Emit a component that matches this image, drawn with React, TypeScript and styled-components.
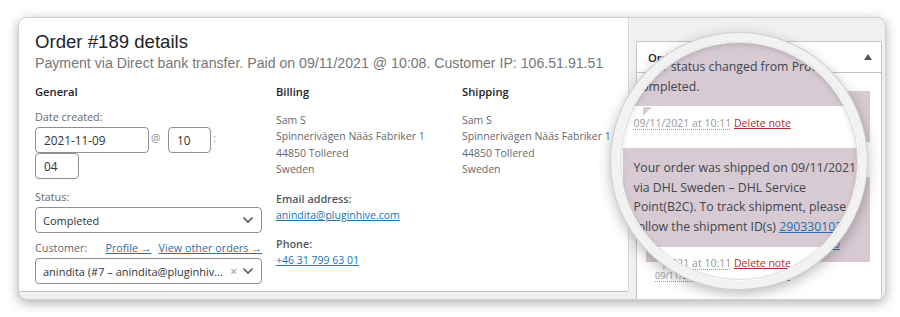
import React from "react";
import styled, { createGlobalStyle } from "styled-components";

const GlobalStyle = createGlobalStyle`
  html, body {
    margin: 0;
    padding: 0;
    background: #fff;
  }
  body {
    font-family: "Open Sans", "Noto Sans", sans-serif;
    color: #3c434a;
  }
  * {
    box-sizing: border-box;
  }
`;

const Page = styled.div`
  width: 900px;
  height: 317px;
  padding: 17px 14px 17px 18px;
`;

const Window = styled.div`
  position: relative;
  display: flex;
  align-items: flex-start;
  width: 868px;
  height: 283px;
  background: #f0f0f1;
  border: 1px solid #cfd0d2;
  border-radius: 9px;
  box-shadow: 0 3px 12px rgba(0, 0, 0, 0.32);
  overflow: hidden;
`;

const Main = styled.section`
  flex-shrink: 0;
  width: 610px;
  height: 274px;
  padding: 13px 16px 0;
  background: #fff;
  border-right: 1px solid #dcdcde;
  border-bottom: 1px solid #c3c4c7;
`;

const Title = styled.h2`
  margin: 0;
  font-family: "Liberation Sans", Arial, sans-serif;
  font-weight: 400;
  font-size: 18.6px;
  line-height: 22px;
  color: #1d2327;
`;

const PaymentLine = styled.p`
  margin: 0;
  font-family: "Liberation Sans", Arial, sans-serif;
  font-size: 14.15px;
  line-height: 20px;
  color: #777;
  white-space: nowrap;
`;

const Columns = styled.div`
  display: grid;
  grid-template-columns: 227px 172px 1fr;
  column-gap: 14px;
  margin-top: 11px;
`;

const Column = styled.div`
  display: flex;
  flex-direction: column;
`;

const ColHead = styled.h3`
  margin: 0;
  font-size: 11.2px;
  font-weight: 600;
  line-height: 16px;
  color: #1d2327;
`;

const FieldLabel = styled.div<{ $mt: number }>`
  margin-top: ${(p) => p.$mt}px;
  font-size: 10.8px;
  line-height: 16px;
  color: #646970;
`;

const DateRow = styled.div`
  display: flex;
  flex-wrap: wrap;
  align-items: center;
  width: 227px;
  margin-top: 2px;
`;

const TextBox = styled.input<{ $w: number }>`
  width: ${(p) => p.$w}px;
  height: 26px;
  margin: 0;
  padding: 0 8px;
  border: 1px solid #8c8f94;
  border-radius: 4px;
  background: #fff;
  font-family: "Open Sans", "Noto Sans", sans-serif;
  font-size: 11.8px;
  color: #2c3338;
  outline: none;
`;

const Sep = styled.span<{ $w: number }>`
  width: ${(p) => p.$w}px;
  padding: 0 0 4px 2px;
  font-size: 10.5px;
  color: #8c8f94;
`;

const Select = styled.div<{ $mt: number }>`
  display: flex;
  align-items: center;
  width: 227px;
  height: 26px;
  margin-top: ${(p) => p.$mt}px;
  padding: 0 7px 0 7px;
  border: 1px solid #8c8f94;
  border-radius: 4px;
  background: #fff;
  font-size: 11px;
  color: #2c3338;
`;

const SelectText = styled.span`
  flex: 1;
  min-width: 0;
  white-space: nowrap;
  overflow: hidden;
  text-overflow: ellipsis;
`;

const Clear = styled.span`
  margin: 0 5px 0 4px;
  font-size: 12px;
  color: #8c8f94;
`;

const CustomerRow = styled.div`
  display: flex;
  justify-content: space-between;
  margin-top: 7px;
  font-size: 10.8px;
  line-height: 16px;
  color: #646970;
`;

const RowLinks = styled.span`
  display: flex;
  gap: 7px;
`;

const Link = styled.a`
  color: #2271b1;
  text-decoration: underline;
  cursor: pointer;
`;

const Address = styled.div`
  margin-top: 11.7px;
  font-size: 10.5px;
  line-height: 16.6px;
  color: #646970;
  white-space: nowrap;
`;

const InfoLabel = styled.div<{ $mt: number }>`
  margin-top: ${(p) => p.$mt}px;
  font-size: 10.8px;
  font-weight: 600;
  line-height: 16px;
  color: #50575e;
`;

const InfoValue = styled.div`
  font-size: 10.5px;
  line-height: 16.6px;
`;

const Sidebar = styled.aside`
  flex-shrink: 0;
  width: 246px;
  height: 270px;
  margin: 23px 0 0 7px;
  background: #fff;
  border: 1px solid #c3c4c7;
`;

const SideHead = styled.div`
  display: flex;
  align-items: center;
  justify-content: space-between;
  height: 31px;
  padding: 0 9px 0 11px;
  border-bottom: 1px solid #c3c4c7;
  font-size: 11.2px;
  font-weight: 600;
  color: #1d2327;
`;

const SideNotes = styled.div`
  padding: 18px 11px 0 9px;
`;

type K = { $k: number };

const NoteBody = styled.div<K & { $lead?: number }>`
  position: relative;
  padding: ${(p) => 9 * p.$k + (p.$lead || 0)}px ${(p) => 9 * p.$k}px
    ${(p) => 9 * p.$k}px;
  background: #d7cad2;
  color: #3f464d;
  font-size: ${(p) => 10.5 * p.$k}px;
  line-height: ${(p) => 16.6 * p.$k}px;
  white-space: nowrap;

  &::after {
    content: "";
    position: absolute;
    left: ${(p) => 17 * p.$k}px;
    bottom: ${(p) => -8 * p.$k}px;
    border-style: solid;
    border-width: ${(p) => 8 * p.$k}px ${(p) => 8 * p.$k}px 0 0;
    border-color: #d7cad2 transparent transparent transparent;
  }

  a {
    color: #2271b1;
    text-decoration: underline;
  }
`;

const Meta = styled.p<K>`
  margin: 0;
  padding: ${(p) => 8.5 * p.$k}px ${(p) => 9 * p.$k}px ${(p) => 14.8 * p.$k}px;
  font-size: ${(p) => 9 * p.$k}px;
  line-height: ${(p) => 12 * p.$k}px;
  color: #999;
  white-space: nowrap;
`;

const Stamp = styled.abbr`
  text-decoration: underline dotted #999;
  text-underline-offset: 2px;
`;

const DeleteNote = styled.a`
  color: #b32d2e;
  text-decoration: underline;
`;

const Lens = styled.div`
  position: absolute;
  left: 592px;
  top: 15px;
  width: 256px;
  height: 256px;
  border-radius: 50%;
  border: 8px solid #f2f2f2;
  background: #fff;
  overflow: hidden;
  box-shadow: 0 0 0 1px #d0d0d0, 0 4px 14px rgba(0, 0, 0, 0.3);

  &::after {
    content: "";
    position: absolute;
    inset: 0;
    border-radius: 50%;
    box-shadow: inset 0 0 0 1px #fff, inset 0 0 0 2px #dedede,
      inset 0 2px 7px rgba(0, 0, 0, 0.22);
    pointer-events: none;
  }
`;

const LensView = styled.div`
  position: absolute;
  left: 4px;
  top: -23.4px;
  width: 262px;
`;

const Chevron = () => (
  <svg width="12" height="8" viewBox="0 0 12 8">
    <path d="M1.5 1.5 6 6l4.5-4.5" fill="none" stroke="#50575e" strokeWidth="1.6" />
  </svg>
);

const Toggle = () => (
  <svg width="8" height="6" viewBox="0 0 8 6">
    <path d="M0 6 4 0l4 6z" fill="#50575e" />
  </svg>
);

const NoteMeta = ({ k }: { k: number }) => (
  <Meta $k={k}>
    <Stamp title="2021-11-09 10:11">09/11/2021 at 10:11</Stamp>{" "}
    <DeleteNote>Delete note</DeleteNote>
  </Meta>
);

const NoteFeed = ({ k, lead }: { k: number; lead?: number }) => (
  <>
    <NoteBody $k={k} $lead={lead}>
      Order status changed from Processing to
      <br />
      Completed.
    </NoteBody>
    <NoteMeta k={k} />
    <NoteBody $k={k}>
      Your order was shipped on 09/11/2021
      <br />
      via DHL Sweden – DHL Service
      <br />
      Point(B2C). To track shipment, please
      <br />
      follow the shipment ID(s) <a>2903301030</a>
    </NoteBody>
    <NoteMeta k={k} />
  </>
);

const address = ["Sam S", "Spinnerivägen Nääs Fabriker 1", "44850 Tollered", "Sweden"];

export default function App() {
  return (
    <Page>
      <GlobalStyle />
      <Window>
        <Main>
          <Title>Order #189 details</Title>
          <PaymentLine>
            Payment via Direct bank transfer. Paid on 09/11/2021 @ 10:08. Customer IP:
            106.51.91.51
          </PaymentLine>
          <Columns>
            <Column>
              <ColHead>General</ColHead>
              <FieldLabel $mt={9}>Date created:</FieldLabel>
              <DateRow>
                <TextBox $w={114} defaultValue="2021-11-09" />
                <Sep $w={19}>@</Sep>
                <TextBox $w={43} defaultValue="10" />
                <Sep $w={10}>:</Sep>
                <TextBox $w={44} defaultValue="04" />
              </DateRow>
              <FieldLabel $mt={10}>Status:</FieldLabel>
              <Select $mt={2}>
                <SelectText>Completed</SelectText>
                <Chevron />
              </Select>
              <CustomerRow>
                <span>Customer:</span>
                <RowLinks>
                  <Link>Profile →</Link>
                  <Link>View other orders →</Link>
                </RowLinks>
              </CustomerRow>
              <Select $mt={2}>
                <SelectText>anindita (#7 – anindita@pluginhive.com)</SelectText>
                <Clear>×</Clear>
                <Chevron />
              </Select>
            </Column>
            <Column>
              <ColHead>Billing</ColHead>
              <Address>
                {address.map((line) => (
                  <div key={line}>{line}</div>
                ))}
              </Address>
              <InfoLabel $mt={12.6}>Email address:</InfoLabel>
              <InfoValue>
                <Link>anindita@pluginhive.com</Link>
              </InfoValue>
              <InfoLabel $mt={12.4}>Phone:</InfoLabel>
              <InfoValue>
                <Link>+46 31 799 63 01</Link>
              </InfoValue>
            </Column>
            <Column>
              <ColHead>Shipping</ColHead>
              <Address>
                {address.map((line) => (
                  <div key={line}>{line}</div>
                ))}
              </Address>
            </Column>
          </Columns>
        </Main>
        <Sidebar>
          <SideHead>
            <span>Order notes</span>
            <Toggle />
          </SideHead>
          <SideNotes>
            <NoteFeed k={1} />
          </SideNotes>
        </Sidebar>
        <Lens>
          <LensView>
            <NoteFeed k={1.17} lead={29} />
          </LensView>
        </Lens>
      </Window>
    </Page>
  );
}
